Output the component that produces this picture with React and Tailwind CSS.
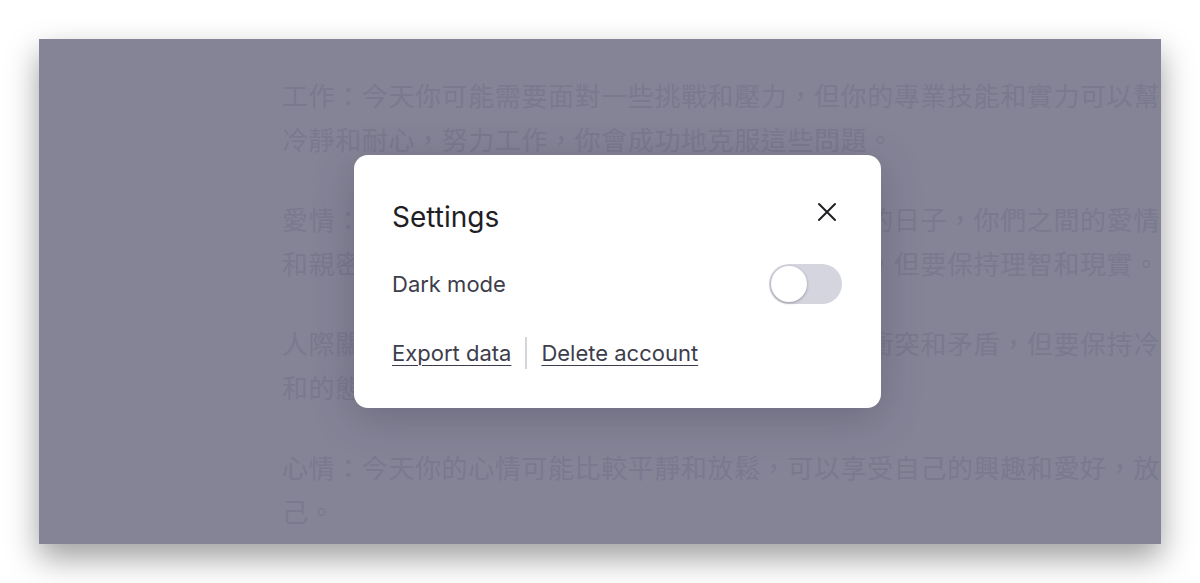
const PARAGRAPHS = [
  [
    '工作：今天你可能需要面對一些挑戰和壓力，但你的專業技能和實力可以幫助你',
    '冷靜和耐心，努力工作，你會成功地克服這些問題。',
  ],
  [
    '愛情：今天你和你的伴侶可能會度過一段非常美好的日子，你們之間的愛情',
    '和親密感會進一步加深。你們可以享受甜蜜的時光，但要保持理智和現實。',
  ],
  [
    '人際關係：今天你可能會與同事或朋友發生一些小衝突和矛盾，但要保持冷靜平',
    '和的態度，以和平的方式解決問題。',
  ],
  [
    '心情：今天你的心情可能比較平靜和放鬆，可以享受自己的興趣和愛好，放鬆自',
    '己。',
  ],
]

function Toggle() {
  return (
    <div className="flex h-[40px] w-[73px] items-center rounded-full bg-[#d5d5df] px-[2px]">
      <div className="h-[36px] w-[36px] rounded-full bg-white shadow-[0_1px_3px_rgba(0,0,0,0.3)]" />
    </div>
  )
}

function CloseIcon() {
  return (
    <svg width="20" height="20" viewBox="0 0 20 20" fill="none" stroke="currentColor" strokeWidth="2" strokeLinecap="round">
      <path d="M2 2l16 16M18 2L2 18" />
    </svg>
  )
}

function SettingsModal() {
  return (
    <div className="absolute left-[315px] top-[116px] h-[253px] w-[527px] rounded-[14px] bg-white px-[38px] pt-[44px] shadow-[0_10px_40px_rgba(40,40,60,0.25)] font-['Inter','Liberation_Sans',sans-serif]">
      <div className="flex items-start justify-between">
        <h2 className="text-[28px] leading-[36px] font-normal text-[#1e1e24]">Settings</h2>
        <button className="mr-[6px] mt-[3px] text-[#1f1f24]">
          <CloseIcon />
        </button>
      </div>

      <div className="mt-[29px] flex h-[40px] items-center justify-between pr-[1px]">
        <span className="text-[22px] text-[#3d3d4c]">Dark mode</span>
        <Toggle />
      </div>

      <div className="mt-[33px] flex h-[32px] items-center text-[22px] text-[#3d3d4c]">
        <a className="underline decoration-1 underline-offset-[4px]">Export data</a>
        <span className="mx-[14px] h-[32px] w-[2px] bg-[#d4d4da]" />
        <a className="underline decoration-1 underline-offset-[4px]">Delete account</a>
      </div>
    </div>
  )
}

export default function App() {
  return (
    <div className="h-[583px] w-[1200px] bg-white pl-[39px] pt-[39px]">
      <div className="relative h-[505px] w-[1122px] overflow-hidden bg-[#858497] shadow-[0_14px_30px_rgba(0,0,0,0.38)]">
        <div className="pl-[243px] pt-[34px] font-['Noto_Sans_CJK_TC',sans-serif] text-[26px] leading-[44px] tracking-[0.6px] text-[#7a798d]">
          {PARAGRAPHS.map((lines, i) => (
            <p key={i} className="mb-[36px]">
              {lines.map((line) => (
                <span key={line} className="block whitespace-nowrap">
                  {line}
                </span>
              ))}
            </p>
          ))}
        </div>

        <SettingsModal />
      </div>
    </div>
  )
}
